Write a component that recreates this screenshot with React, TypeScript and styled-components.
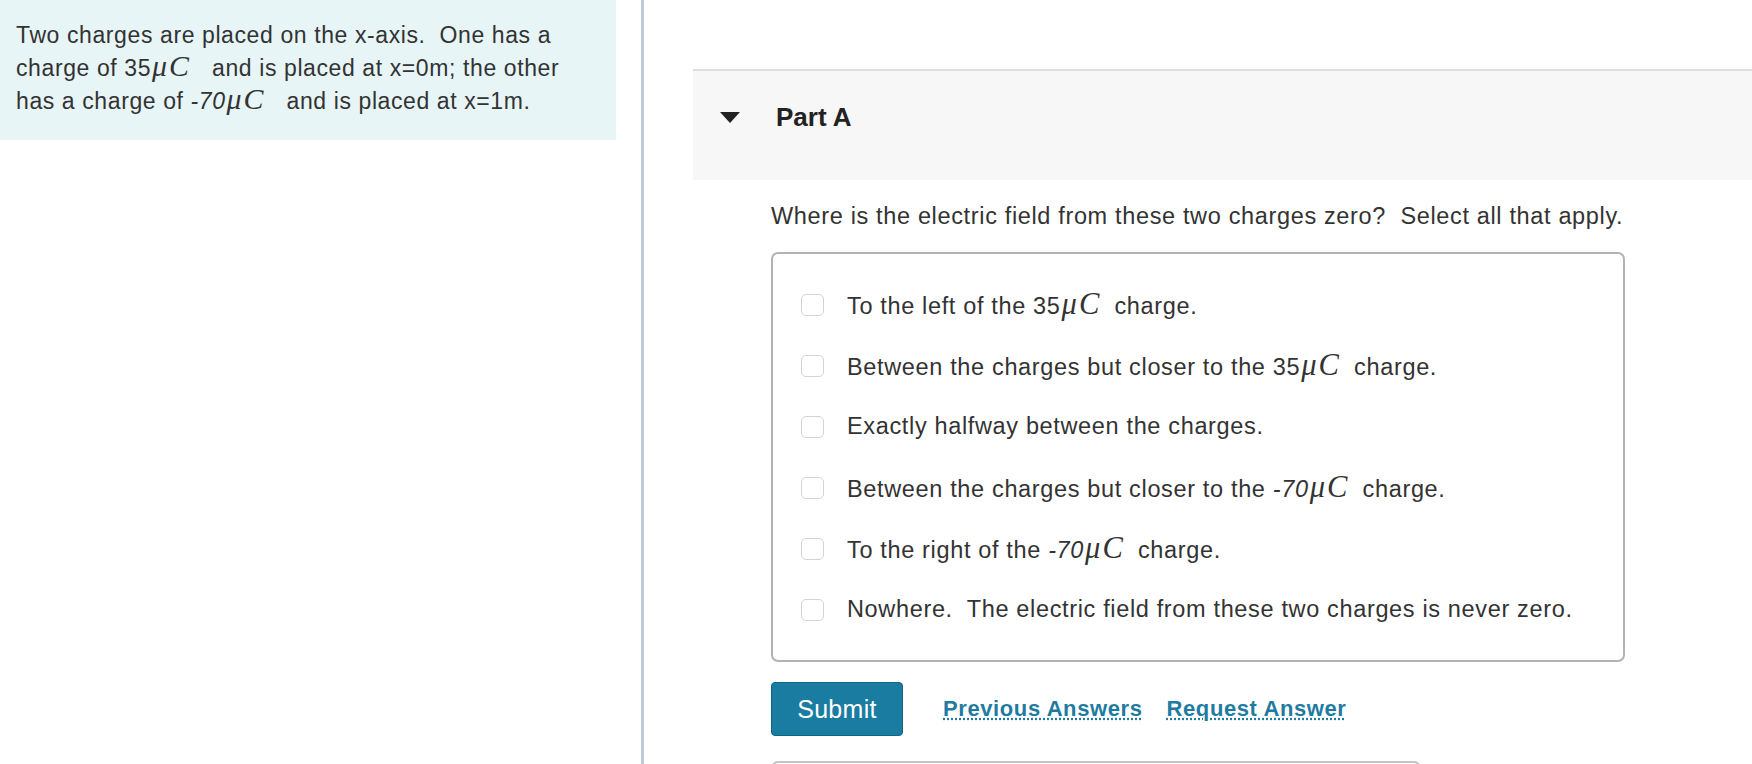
import React from 'react';
import styled, { createGlobalStyle } from 'styled-components';

const GlobalStyle = createGlobalStyle`
  html, body {
    margin: 0;
    padding: 0;
    background: #fff;
    height: 100%;
  }
  body {
    font-family: "Liberation Sans", Arial, sans-serif;
    color: #333;
  }
`;

const Page = styled.div`
  display: flex;
  height: 764px;
  overflow: hidden;
`;

const LeftColumn = styled.aside`
  width: 616px;
  flex-shrink: 0;
`;

const IntroPanel = styled.div`
  background: #e7f5f7;
  padding: 19px 16px 12px 16px;
  height: 140px;
  box-sizing: border-box;
`;

const IntroText = styled.p`
  margin: 0;
  font-size: 23px;
  letter-spacing: 0.6px;
  line-height: 32px;
  color: #333;
`;

const Divider = styled.div`
  width: 3px;
  margin-left: 25px;
  background: #bfcdd5;
  flex-shrink: 0;
`;

const RightColumn = styled.main`
  flex: 1;
  margin-left: 49px;
  padding-top: 69px;
`;

const PartHeader = styled.div`
  display: flex;
  align-items: center;
  height: 111px;
  box-sizing: border-box;
  padding: 0 0 16px 27px;
  background: #f7f7f7;
  border-top: 2px solid #dedede;
`;

const Caret = styled.span`
  width: 0;
  height: 0;
  border-left: 10px solid transparent;
  border-right: 10px solid transparent;
  border-top: 11px solid #222;
  margin-right: 36px;
`;

const PartTitle = styled.h2`
  margin: 0;
  font-size: 26px;
  font-weight: bold;
  color: #222;
`;

const PartBody = styled.section`
  padding-left: 78px;
`;

const Prompt = styled.p`
  margin: 22px 0 0 0;
  font-size: 23.5px;
  letter-spacing: 0.65px;
  line-height: 28px;
  color: #333;
`;

const ChoiceBox = styled.div`
  margin-top: 22px;
  width: 854px;
  box-sizing: border-box;
  border: 2px solid #b3b3b3;
  border-radius: 7px;
  padding: 20px 0 20px 28px;
`;

const ChoiceRow = styled.label`
  display: flex;
  align-items: center;
  height: 61px;
`;

const Box = styled.span`
  width: 23px;
  height: 22px;
  box-sizing: border-box;
  border: 1.5px solid #d4d4d4;
  border-radius: 5px;
  background: #fff;
  margin-right: 23px;
  flex-shrink: 0;
`;

const ChoiceText = styled.span`
  font-size: 23.5px;
  letter-spacing: 0.65px;
  color: #333;
`;

const MathSpan = styled.span`
  white-space: nowrap;
`;

const MathVar = styled.i<{ $wide?: boolean }>`
  font-family: "Liberation Serif", "DejaVu Serif", serif;
  font-style: italic;
  font-size: 1.3em;
  letter-spacing: 2px;
  line-height: 1;
  margin-left: 1px;
  margin-right: ${(p) => (p.$wide ? '14px' : '6px')};
`;

const MathNum = styled.span<{ $italic?: boolean }>`
  font-style: ${(p) => (p.$italic ? 'italic' : 'normal')};
`;

const Actions = styled.div`
  display: flex;
  align-items: center;
  margin-top: 20px;
`;

const SubmitButton = styled.button`
  width: 132px;
  height: 54px;
  background: #1a7ca0;
  border: 1px solid #0f6585;
  border-radius: 4px;
  color: #fff;
  font-family: "Liberation Sans", Arial, sans-serif;
  font-size: 25px;
  letter-spacing: 0.3px;
  margin-right: 40px;
  cursor: pointer;
`;

const ActionLink = styled.a`
  font-size: 22px;
  letter-spacing: 0.6px;
  font-weight: bold;
  color: #1f7ba1;
  text-decoration: underline dotted;
  text-underline-offset: 2px;
  margin-right: 24px;
  cursor: pointer;
`;

const NextBox = styled.div`
  margin-top: 25px;
  width: 650px;
  height: 20px;
  box-sizing: border-box;
  border: 2px solid #c4c4c4;
  border-bottom: none;
  border-radius: 7px 7px 0 0;
`;

const Charge: React.FC<{ value: string; italic?: boolean; wide?: boolean }> = ({
  value,
  italic,
  wide,
}) => (
  <MathSpan>
    <MathNum $italic={italic}>{value}</MathNum>
    <MathVar $wide={wide}>μC</MathVar>
  </MathSpan>
);

const choices: React.ReactNode[] = [
  <>To the left of the <Charge value="35" /> charge.</>,
  <>Between the charges but closer to the <Charge value="35" /> charge.</>,
  <>Exactly halfway between the charges.</>,
  <>Between the charges but closer to the <Charge value="-70" italic /> charge.</>,
  <>To the right of the <Charge value="-70" italic /> charge.</>,
  <>Nowhere.{'\u00a0 '}The electric field from these two charges is never zero.</>,
];

const App: React.FC = () => {
  return (
    <>
      <GlobalStyle />
      <Page>
        <LeftColumn>
          <IntroPanel>
            <IntroText>
              Two charges are placed on the x-axis.{'\u00a0 '}One has a
              <br />
              charge of <Charge value="35" wide /> and is placed at x=0m; the other
              <br />
              has a charge of <Charge value="-70" italic wide /> and is placed at x=1m.
            </IntroText>
          </IntroPanel>
        </LeftColumn>
        <Divider />
        <RightColumn>
          <PartHeader>
            <Caret />
            <PartTitle>Part A</PartTitle>
          </PartHeader>
          <PartBody>
            <Prompt>
              Where is the electric field from these two charges zero?{'\u00a0 '}Select all that apply.
            </Prompt>
            <ChoiceBox>
              {choices.map((c, i) => (
                <ChoiceRow key={i}>
                  <Box />
                  <ChoiceText>{c}</ChoiceText>
                </ChoiceRow>
              ))}
            </ChoiceBox>
            <Actions>
              <SubmitButton>Submit</SubmitButton>
              <ActionLink>Previous Answers</ActionLink>
              <ActionLink>Request Answer</ActionLink>
            </Actions>
            <NextBox />
          </PartBody>
        </RightColumn>
      </Page>
    </>
  );
};

export default App;
